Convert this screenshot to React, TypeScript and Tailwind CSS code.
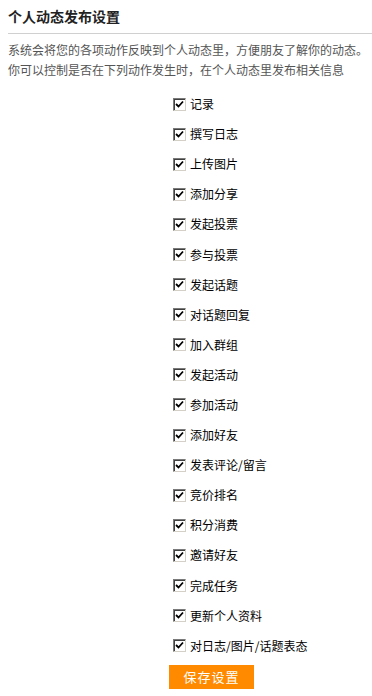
import { useState } from 'react';

const ITEMS = [
  '记录',
  '撰写日志',
  '上传图片',
  '添加分享',
  '发起投票',
  '参与投票',
  '发起话题',
  '对话题回复',
  '加入群组',
  '发起活动',
  '参加活动',
  '添加好友',
  '发表评论/留言',
  '竞价排名',
  '积分消费',
  '邀请好友',
  '完成任务',
  '更新个人资料',
  '对日志/图片/话题表态',
];

function Check({ on }: { on: boolean }) {
  return (
    <span className="flex h-[13px] w-[13px] shrink-0 items-center justify-center border border-t-[#7a7a7a] border-l-[#7a7a7a] border-b-[#d4d0c8] border-r-[#d4d0c8] bg-white shadow-[inset_1px_1px_0_#404040]">
      {on && (
        <svg viewBox="0 0 9 9" className="h-[9px] w-[9px]">
          <path d="M1 4 L3.5 6.5 L8 1.5" fill="none" stroke="#000" strokeWidth="1.8" />
        </svg>
      )}
    </span>
  );
}

export default function App() {
  const [checked, setChecked] = useState<boolean[]>(() => ITEMS.map(() => true));

  return (
    <div className="min-h-[696px] w-[372px] overflow-hidden bg-white font-['Noto_Sans_CJK_SC',sans-serif] text-[12px] text-black">
      <div className="pl-2 pt-[7px]">
        <h2 className="pb-[8px] text-[14px] font-bold leading-[18px] text-[#222]">个人动态发布设置</h2>
        <div className="h-px bg-[#d0d0d0]" />
        <p className="mt-[6px] whitespace-nowrap leading-[20px] text-[#555]">
          系统会将您的各项动作反映到个人动态里，方便朋友了解你的动态。
          <br />
          你可以控制是否在下列动作发生时，在个人动态里发布相关信息
        </p>
      </div>

      <ul className="mt-[9px] flex flex-col pl-[173px]">
        {ITEMS.map((label, i) => (
          <li key={label} className="h-[30.1px]">
            <label
              className="flex h-full cursor-pointer items-center gap-[4px]"
              onClick={() => setChecked((c) => c.map((v, j) => (j === i ? !v : v)))}
            >
              <Check on={checked[i]} />
              <span className="leading-[16px]">{label}</span>
            </label>
          </li>
        ))}
      </ul>

      <div className="mt-[4px] pl-[169px]">
        <button
          type="button"
          className="h-[24px] w-[85px] bg-[#ff8a00] text-[13px] tracking-[1px] text-white"
        >
          保存设置
        </button>
      </div>
    </div>
  );
}
